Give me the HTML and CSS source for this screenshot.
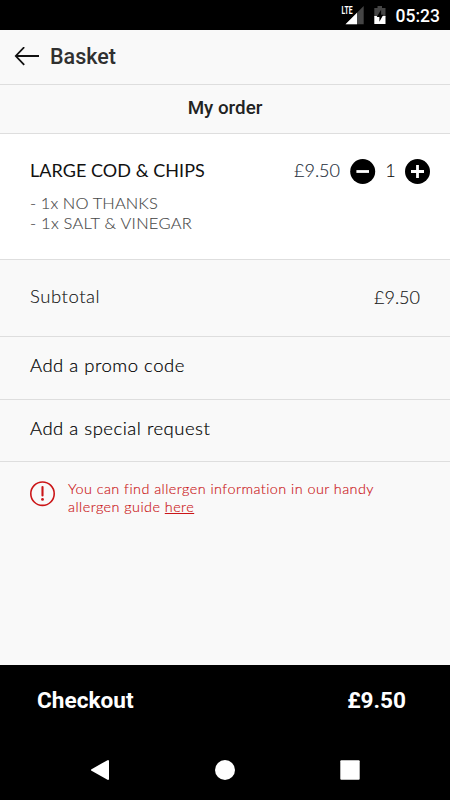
FILE: index.html
```html
<!DOCTYPE html>
<html lang="en">
<head>
<meta charset="utf-8">
<title>Basket</title>
<link rel="stylesheet" href="styles.css">
</head>
<body>
<div class="screen">
  <div class="status">
    <svg class="signal" width="24" height="20" viewBox="0 0 24 20"><path d="M22.7 1V19.2H4.5Z" fill="#454545"/><path d="M16 7.7V19.2H4.5Z" fill="#fff"/><path d="M0 0H13V9.5H0Z" fill="#000"/><text class="lte" x="0.5" y="9" textLength="11" lengthAdjust="spacingAndGlyphs">LTE</text></svg>
    <svg class="battery" width="12" height="18" viewBox="0 0 12 18"><path d="M3.5 0H8V2H11.5V11H.3V2H3.5Z" fill="#454545"/><path d="M.3 10H11.5V18H.3Z" fill="#fff"/><path d="M7.1 3.7 2.7 11H5.4V15.7L9.3 8.7H7.1Z" fill="#000"/></svg>
    <span class="clock">05:23</span>
  </div>
  <header class="appbar">
    <svg width="26" height="20" viewBox="0 0 26 20" fill="none" stroke="#111" stroke-width="1.8"><path d="M25 9H2M10.2 .2 1.8 9 10.2 17.8"/></svg>
    <h1>Basket</h1>
  </header>
  <h2 class="title">My order</h2>
  <section class="item">
    <div class="item-row">
      <span class="name">LARGE COD &amp; CHIPS</span>
      <span class="price">£9.50</span>
      <svg class="step" width="26" height="26" viewBox="0 0 26 26"><circle cx="12.7" cy="12.5" r="12.5"/><path d="M6.4 12.5H19" stroke="#fff" stroke-width="2.8"/></svg>
      <span class="qty">1</span>
      <svg class="step" width="26" height="26" viewBox="0 0 26 26"><circle cx="12.5" cy="12.5" r="12.5"/><path d="M6 12.5H19M12.5 6V19" stroke="#fff" stroke-width="2.8"/></svg>
    </div>
    <div class="options"><div class="opt-a">- 1x NO THANKS</div><div class="opt-b">- 1x SALT &amp; VINEGAR</div></div>
  </section>
  <div class="subtotal"><span class="sub-label">Subtotal</span><span class="sub-price">£9.50</span></div>
  <div class="link promo">Add a promo code</div>
  <div class="link request">Add a special request</div>
  <div class="notice">
    <svg width="26" height="26" viewBox="0 0 26 26" fill="none" stroke="#cb1517"><circle cx="13.5" cy="12.7" r="11.7" stroke-width="1.6"/><path d="M13.5 6V14.5" stroke-width="2.1" stroke-linecap="round"/><circle cx="13.5" cy="18.4" r="1.4" fill="#cb1517" stroke="none"/></svg>
    <p><span class="line-a">You can find allergen information in our handy</span><br><span class="line-b">allergen guide <a>here</a></span></p>
  </div>
  <div class="space"></div>
  <div class="checkout"><span class="co-label">Checkout</span><span class="co-price">£9.50</span></div>
  <nav class="nav">
    <svg width="20" height="22" viewBox="0 0 20 22"><path d="M18 2V20L2 11Z" fill="#fff" stroke="#fff" stroke-width="2" stroke-linejoin="round"/></svg>
    <svg width="20" height="22" viewBox="0 0 20 22"><circle cx="10" cy="11" r="10" fill="#fff"/></svg>
    <svg width="20" height="22" viewBox="0 0 20 22"><rect x=".3" y="1.3" width="19.4" height="19.4" rx="1" fill="#fff"/></svg>
  </nav>
</div>
</body>
</html>
```
FILE: styles.css
```css
* { box-sizing: border-box; }
body { margin: 0; font-family: Lato, "Open Sans", sans-serif; font-weight: 300; background: #f9f9f9; color: #111; }
svg { display: block; flex: none; }
h1, h2, p { margin: 0; }
.screen { width: 450px; height: 800px; display: flex; flex-direction: column; overflow: hidden; white-space: nowrap; }
.status { height: 30px; flex: none; background: #000; color: #fff; display: flex; align-items: center; justify-content: flex-end; padding-right: 10px; }
.signal { margin: 0 9px 0 0; }
.lte { font: 700 11px Roboto, sans-serif; fill: #fff; }
.battery { margin-right: 10px; }
.clock { font: 500 17.5px/30px Roboto, sans-serif; padding-top: 2px; }
.appbar { height: 55px; flex: none; border-bottom: 1px solid #dedede; display: flex; align-items: center; padding-left: 14px; gap: 10px; }
.appbar h1 { font: 500 21.5px/54px Roboto, sans-serif; color: #303030; }
.title { height: 48px; flex: none; font: 500 18.8px/46px Roboto, sans-serif; text-align: center; color: #222; }
.item { height: 127px; flex: none; background: #fff; border: solid #dedede; border-width: 1px 0; padding: 25px 19px 0 30px; }
.item-row { display: flex; align-items: center; height: 26px; font-size: 18px; }
.name { font-weight: 400; margin-right: auto; padding-bottom: 4px; letter-spacing: 0.05px; }
.price { margin-right: 10px; padding-bottom: 4px; color: #222b38; }
.qty { width: 29px; text-align: center; padding-bottom: 4px; }
.options { padding-top: 8px; font-size: 16.5px; line-height: 20px; color: #484848; }
.opt-a { letter-spacing: 0.1px; }
.opt-b { letter-spacing: 0.25px; }
.options, .price, .qty, .subtotal { -webkit-text-stroke: 0.12px currentColor; }
.subtotal { height: 77px; flex: none; display: flex; justify-content: space-between; align-items: center; padding: 0 30px; border-bottom: 1px solid #dedede; font-size: 18px; }
.sub-label { font-size: 18.5px; letter-spacing: 0.55px; padding-bottom: 4px; }
.sub-price { padding-bottom: 2px; }
.link { flex: none; height: 63px; border-bottom: 1px solid #dedede; padding-left: 30px; line-height: 57px; font-size: 18.5px; letter-spacing: 0.5px; color: #000; -webkit-text-stroke: 0.2px #000; }
.request { height: 62px; }
.notice { flex: none; display: flex; padding: 19px 0 0 29px; gap: 13px; color: #cb1517; font-size: 14.4px; line-height: 17.5px; letter-spacing: 0.45px; }
.notice p { margin-top: -1px; -webkit-text-stroke: 0.15px #cb1517; }
.notice a { text-decoration: underline; }
.space { flex: 1; }
.checkout { flex: none; height: 75px; background: #000; color: #fff; display: flex; justify-content: space-between; padding: 0 44px 0 37px; font: 700 22.6px/71px Roboto, sans-serif; }
.nav { flex: none; height: 60px; background: #000; display: flex; justify-content: space-between; align-items: center; padding: 0 90px; }
```
